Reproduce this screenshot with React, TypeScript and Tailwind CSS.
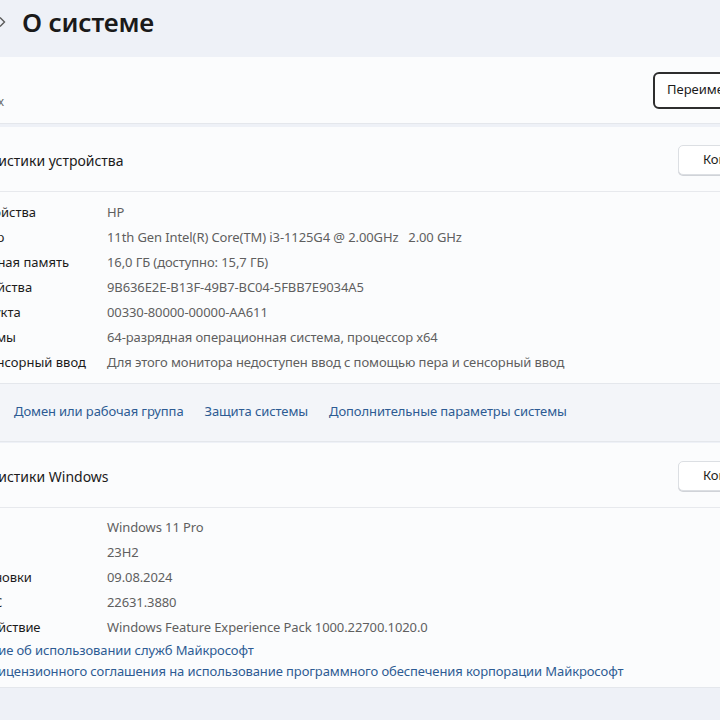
import React from "react";

const deviceSpecs = [
  ["Имя устройства", "HP"],
  ["Процессор", "11th Gen Intel(R) Core(TM) i3-1125G4 @ 2.00GHz   2.00 GHz"],
  ["Оперативная память", "16,0 ГБ (доступно: 15,7 ГБ)"],
  ["Код устройства", "9B636E2E-B13F-49B7-BC04-5FBB7E9034A5"],
  ["Код продукта", "00330-80000-00000-AA611"],
  ["Тип системы", "64-разрядная операционная система, процессор x64"],
  ["Перо и сенсорный ввод", "Для этого монитора недоступен ввод с помощью пера и сенсорный ввод"],
];

const windowsSpecs = [
  ["Выпуск", "Windows 11 Pro"],
  ["Версия", "23H2"],
  ["Дата установки", "09.08.2024"],
  ["Сборка ОС", "22631.3880"],
  ["Взаимодействие", "Windows Feature Experience Pack 1000.22700.1020.0"],
];

const SpecRow = ({ label, value }: { label: string; value: string }) => (
  <div className="flex h-[25px] items-center">
    <span className="w-[171px] shrink-0 text-[#1b1b1b]">{label}</span>
    <span className="whitespace-pre tracking-[-0.1px] text-[#5f5f5f]">{value}</span>
  </div>
);

const CardHeader = ({ title }: { title: string }) => (
  <div className="flex h-[65px] items-center justify-between border-b border-[#e7e9ed] pl-[64px] pt-[3px]">
    <span className="text-[14px] text-[#1b1b1b]">{title}</span>
    <button className="mr-[-6px] mt-[-2px] h-[30px] w-[100px] rounded-[5px] border border-[#dcdfe3] bg-white pl-[24px] text-left text-[13px] text-[#1b1b1b] shadow-[0_1px_0_#d0d3d8]">
      Копировать
    </button>
  </div>
);

export default function App() {
  return (
    <div
      className="h-[720px] w-[720px] overflow-hidden bg-[#eef1f7] text-[13px]"
      style={{ fontFamily: '"Noto Sans", "Open Sans", sans-serif' }}
    >
      <div className="ml-[-128px] w-[900px]">
        {/* breadcrumb */}
        <div className="h-[57px] pl-[128px] pt-[6px]">
          <div className="flex h-[32px] items-center gap-[16px]">
            <svg width="8" height="12" viewBox="0 0 8 12" className="ml-[-2px] text-[#5a5a5a]">
              <path d="M2 1.5 6.5 6 2 10.5" fill="none" stroke="currentColor" strokeWidth="1.4" />
            </svg>
            <h1 className="text-[26px] font-semibold leading-[32px] tracking-[-0.2px] text-[#1a1a1a]">О системе</h1>
          </div>
        </div>

        {/* device name card */}
        <div className="flex h-[67px] items-center justify-between border-b border-[#e4e7ec] bg-[#fbfcfd]">
          <div className="flex w-[132px] flex-col items-end">
            <span className="text-[14px] font-semibold leading-[18px] text-transparent">DESKTOP</span>
            <span className="mt-[5px] text-[12px] leading-[16px] text-[#6a6a6a]">Laptop 15s-fq2xxx</span>
          </div>
          <button className="mr-[-81px] h-[37px] w-[200px] rounded-[6px] border-2 border-[#2e2e2e] bg-white pl-[12px] text-left text-[13px] text-[#1b1b1b]">
            Переименовать этот ПК
          </button>
        </div>

        {/* device specs */}
        <div className="mt-[3px] border-b border-[#e4e7ec] bg-[#fbfcfd]">
          <CardHeader title="Характеристики устройства" />
          <div className="pt-[8px] pb-[8px] pl-[64px]">
            {deviceSpecs.map(([label, value]) => (
              <SpecRow key={label} label={label} value={value} />
            ))}
          </div>
        </div>

        {/* related links */}
        <div className="flex h-[58px] items-center gap-[21px] border-b border-[#e4e7ec] bg-[#f3f5f9] pb-[2px] pl-[24px] tracking-[-0.1px] text-[#2d5b93]">
          <span className="w-[97px] shrink-0 text-[#1b1b1b]">Ссылки по теме</span>
          <span>Домен или рабочая группа</span>
          <span>Защита системы</span>
          <span>Дополнительные параметры системы</span>
        </div>

        {/* windows specs */}
        <div className="mt-[1px] border-b border-[#e4e7ec] bg-[#fbfcfd]">
          <CardHeader title="Характеристики Windows" />
          <div className="pt-[7px] pb-[5px] pl-[64px] tracking-[-0.1px]">
            {windowsSpecs.map(([label, value]) => (
              <SpecRow key={label} label={label} value={value} />
            ))}
            <div className="flex h-[21px] items-center text-[#2d5b93]">
              Соглашение об использовании служб Майкрософт
            </div>
            <div className="flex h-[21px] items-center text-[#2d5b93]">
              Условия лицензионного соглашения на использование программного обеспечения корпорации Майкрософт
            </div>
          </div>
        </div>
      </div>
    </div>
  );
}
